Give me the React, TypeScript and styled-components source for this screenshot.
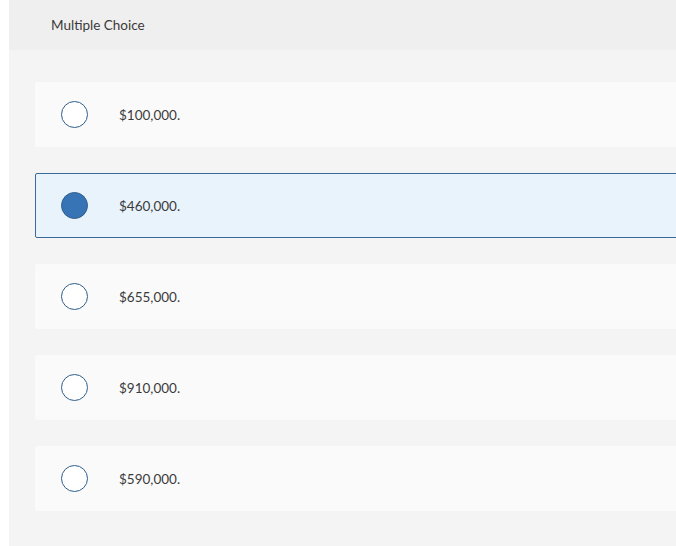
import React from 'react';
import styled, { createGlobalStyle } from 'styled-components';

const GlobalStyle = createGlobalStyle`
  html, body {
    margin: 0;
    padding: 0;
    background: #fff;
  }
  body {
    font-family: Lato, "Open Sans", Arial, sans-serif;
    color: #333;
  }
`;

const Panel = styled.section`
  margin-left: 9px;
  min-height: 546px;
  background-color: #f4f4f4;
  overflow: hidden;
`;

const Header = styled.header`
  background-color: #efefef;
  height: 50px;
  padding-left: 42px;
  display: flex;
  align-items: center;
  font-size: 13.5px;
  color: #3a3a3a;
`;

const OptionList = styled.div`
  display: flex;
  flex-direction: column;
  gap: 26px;
  padding: 32px 0 35px 26px;
  margin-right: -4px;
`;

const Option = styled.label<{ $selected?: boolean }>`
  box-sizing: border-box;
  height: 65px;
  display: flex;
  align-items: center;
  gap: 31px;
  padding-left: 25px;
  background-color: ${(p) => (p.$selected ? '#e9f3fc' : '#fafafa')};
  border: 1px solid ${(p) => (p.$selected ? '#3a6a98' : 'transparent')};
  border-radius: 2px;
  font-size: 13.5px;
  color: #3a3a3a;
  cursor: pointer;
`;

const Radio = styled.span<{ $checked?: boolean }>`
  box-sizing: border-box;
  width: 27px;
  height: 27px;
  border-radius: 50%;
  border: 1.5px solid #2f5e8a;
  background-color: ${(p) => (p.$checked ? '#3674b5' : '#fff')};
  flex-shrink: 0;
`;

const answers = ['$100,000.', '$460,000.', '$655,000.', '$910,000.', '$590,000.'];

const App: React.FC = () => {
  const selected = 1;
  return (
    <>
      <GlobalStyle />
      <Panel>
        <Header>Multiple Choice</Header>
        <OptionList>
          {answers.map((a, i) => (
            <Option key={a} $selected={i === selected}>
              <Radio $checked={i === selected} />
              <span>{a}</span>
            </Option>
          ))}
        </OptionList>
      </Panel>
    </>
  );
};

export default App;
